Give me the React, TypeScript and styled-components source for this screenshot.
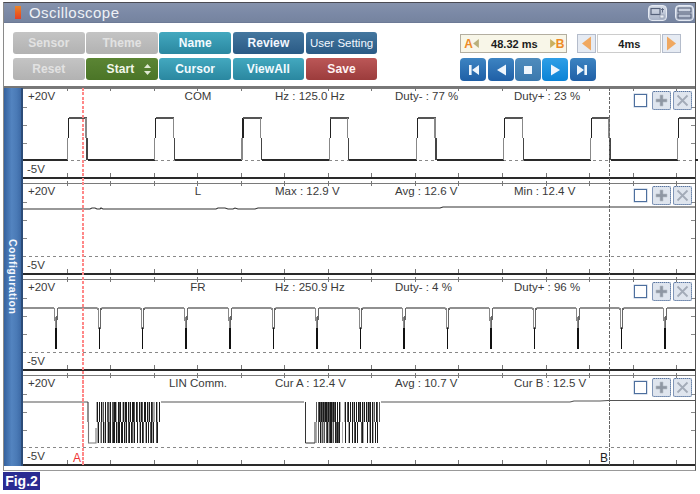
import React from "react";
import styled, { createGlobalStyle } from "styled-components";

const Global = createGlobalStyle`
  html, body { margin: 0; padding: 0; background: #fff; }
  body { font-family: "Liberation Sans", Arial, sans-serif; }
`;

const Page = styled.div`
  width: 700px;
  height: 494px;
  overflow: hidden;
  padding: 2px 0 0 3px;
  box-sizing: border-box;
`;
const Window = styled.div`
  width: 693px;
  border-top: 1px solid #4a4a52;
  border-right: 1px solid #555;
  border-left: 1px solid #8a8a8a;
  border-bottom: 1px solid #999;
  box-sizing: border-box;
  height: 469px;
  background: #fff;
`;
const TitleBar = styled.div`
  height: 19px;
  display: flex;
  align-items: center;
  padding: 0 1px 0 11px;
  background: linear-gradient(#8592ac, #7a88a5 60%, #76849f);
  border-bottom: 1px solid #6d7a96;
`;
const TitleMark = styled.div`
  width: 6px;
  height: 13px;
  background: linear-gradient(#e8852a, #ea5a1e 60%, #e0402a);
  margin-right: 8px;
`;
const Title = styled.div`
  color: #eef1f6;
  font-size: 15px;
  letter-spacing: 0.45px;
  flex: 1;
`;
const HeadButton = styled.div`
  width: 19px;
  height: 16px;
  margin-left: 8px;
  border-radius: 4px;
  border: 1px solid #e4e9f2;
  box-sizing: border-box;
  background: linear-gradient(#d6dce8, #aab4c8);
  display: flex;
  align-items: center;
  justify-content: center;
`;
const Toolbar = styled.div`
  height: 65px;
  display: flex;
  align-items: flex-start;
  padding: 9px 0 0 9px;
  box-sizing: border-box;
  border-bottom: 2px solid #777;
`;
const ButtonGrid = styled.div`
  display: grid;
  grid-template-columns: repeat(5, 71.6px);
  grid-auto-rows: 22px;
  column-gap: 1.6px;
  row-gap: 4px;
`;
const tones = {
  gray: ["#c4c4c4", "#b2b2b2", "#e2e2e2"],
  teal: ["#43a8bf", "#2a87a0", "#f2fbff"],
  navy: ["#44779f", "#2a5a85", "#f2f7ff"],
  green: ["#5b8534", "#4b7527", "#f2f7ea"],
  red: ["#bb5757", "#9c3c3c", "#fff2f2"],
} as const;
type Tone = keyof typeof tones;
const ActionButton = styled.div<{ $tone: Tone; $narrow?: boolean }>`
  border-radius: 3px;
  display: flex;
  align-items: center;
  justify-content: center;
  font-size: ${(p) => (p.$narrow ? "11.5px" : "12px")};
  font-weight: ${(p) => (p.$narrow ? 400 : 700)};
  letter-spacing: ${(p) => (p.$narrow ? "0" : "0.1px")};
  color: ${(p) => tones[p.$tone][2]};
  background: linear-gradient(${(p) => tones[p.$tone][0]}, ${(p) => tones[p.$tone][1]});
  position: relative;
`;
const Spin = styled.span`
  font-size: 9px;
  margin-left: 10px;
  line-height: 8px;
  display: inline-flex;
  flex-direction: column;
  align-items: center;
  font-weight: 400;
`;
const SpinGlyph = styled.svg`
  display: block;
`;
const StartLabel = styled.span`
  margin-left: 14px;
`;
const Controls = styled.div`
  display: flex;
  flex-direction: column;
  margin-left: 83px;
  padding-top: 2px;
  gap: 5px;
`;
const ControlRow = styled.div`
  display: flex;
  align-items: center;
`;
const CursorBox = styled.div`
  width: 107px;
  height: 19px;
  box-sizing: border-box;
  border: 1px solid #b3aea0;
  background: #f8f6e8;
  display: flex;
  align-items: center;
  padding: 0 2px 0 3px;
`;
const CursorLetter = styled.span`
  color: #ee8a26;
  font-size: 12px;
  font-weight: 700;
`;
const CursorValue = styled.span`
  flex: 1;
  text-align: center;
  font-size: 11px;
  font-weight: 700;
  color: #1c1c1c;
`;
const StepButton = styled.div`
  width: 19px;
  height: 19px;
  box-sizing: border-box;
  border: 1px solid #b4bccb;
  background: #e6ebf3;
  display: flex;
  align-items: center;
  justify-content: center;
`;
const StepValue = styled.div`
  width: 64px;
  height: 19px;
  box-sizing: border-box;
  margin: 0 1px;
  border: 1px solid #ccc;
  background: #fff;
  display: flex;
  align-items: center;
  justify-content: center;
  font-size: 11px;
  font-weight: 700;
  color: #1c1c1c;
`;
const Stepper = styled.div`
  display: flex;
  margin-left: 10px;
`;
const Transport = styled.div`
  display: flex;
  gap: 1.3px;
`;
const TransportButton = styled.div<{ $kind?: "stop" | "play" }>`
  width: 26px;
  height: 23px;
  border-radius: 4px;
  display: flex;
  align-items: center;
  justify-content: center;
  background: ${(p) =>
    p.$kind === "stop"
      ? "linear-gradient(#4f8cbd, #3a78ad)"
      : p.$kind === "play"
      ? "linear-gradient(#2f9fe6, #0b83d6)"
      : "linear-gradient(#3d84c2, #1f5fa6)"};
`;
const Body = styled.div`
  display: flex;
  height: 378px;
`;
const Sidebar = styled.div`
  width: 17px;
  border-right: 2px solid #2c4c78;
  background: linear-gradient(90deg, #35629f, #5384c0 45%, #4a7ab6 75%, #3d6aa6);
  display: flex;
  align-items: center;
  justify-content: center;
  color: #f4f8ff;
  font-size: 10.5px;
  font-weight: 700;
  letter-spacing: 0.5px;
  writing-mode: vertical-rl;
`;
const Charts = styled.div`
  flex: 1;
  position: relative;
  display: flex;
  flex-direction: column;
  gap: 4px;
`;
const Panel = styled.div<{ $h: number }>`
  position: relative;
  height: ${(p) => p.$h}px;
  box-sizing: border-box;
  border-top: 1px solid #7a7a7a;
  border-bottom: 2px solid #2a2a2a;
  &:last-of-type { border-bottom-color: #444; }
`;
const Plot = styled.svg`
  position: absolute;
  left: 0;
  top: -1px;
  overflow: visible;
  display: block;
`;
const Readouts = styled.div`
  position: relative;
  display: grid;
  grid-template-columns: 120px 127px 120px 119px auto;
  padding: 0 0 0 5px;
  font-size: 11.5px;
  color: #3a3a3a;
  line-height: 14px;
`;
const NameCell = styled.div`
  text-align: center;
  padding-right: 27px;
`;
const BottomLabel = styled.div`
  position: absolute;
  left: 4px;
  bottom: 1px;
  font-size: 11.5px;
  color: #3a3a3a;
  line-height: 14px;
`;
const PanelTools = styled.div`
  position: absolute;
  right: 3px;
  top: 2px;
  display: flex;
  align-items: center;
`;
const Check = styled.div`
  width: 13px;
  height: 13px;
  box-sizing: border-box;
  border: 1px solid #4d6f9e;
  background: #fff;
  margin-right: 3px;
  box-shadow: 0 0 0 0.5px #b8c6da;
`;
const ToolButton = styled.div`
  width: 19.5px;
  height: 19px;
  margin-left: 1.5px;
  box-sizing: border-box;
  border: 1px solid #a8b8cf;
  border-radius: 2px;
  outline: 1px dotted #5a75a0;
  outline-offset: -1px;
  background: #dfe5ee;
  display: flex;
  align-items: center;
  justify-content: center;
`;
const CursorLine = styled.div<{ $x: number; $color: string; $w: number }>`
  position: absolute;
  left: ${(p) => p.$x}px;
  top: 0;
  bottom: 0;
  width: ${(p) => p.$w}px;
  background: repeating-linear-gradient(${(p) => p.$color} 0 3px, transparent 3px 4.5px);
  pointer-events: none;
`;
const CursorTag = styled.div<{ $x: number; $color: string }>`
  position: absolute;
  left: ${(p) => p.$x}px;
  bottom: 1px;
  font-size: 12px;
  line-height: 13px;
  color: ${(p) => p.$color};
`;
const FigTag = styled.div`
  width: 37px;
  height: 18px;
  margin-top: 1px;
  background: #2b2c92;
  color: #fff;
  font-size: 14px;
  font-weight: 700;
  display: flex;
  align-items: center;
  justify-content: center;
`;

const W = 672;
const X0 = 23;

function Frame({ dash, h }: { dash: number; h: number }) {
  const xs: number[] = [];
  for (let x = 67; x < 695; x += 43.55) xs.push(x);
  return (
    <g shapeRendering="crispEdges">
      {xs.map((x) => (
        <g key={x} stroke="#777" strokeWidth="1">
          <line x1={x} x2={x} y1={-2} y2={3} />
          <line x1={x} x2={x} y1={h - 6} y2={h - 2} />
        </g>
      ))}
      {[19, 37, 55].map((y) => (
        <g key={y} stroke="#888" strokeWidth="1">
          <line x1={X0} x2={27} y1={y} y2={y} />
          <line x1={691} x2={695} y1={y} y2={y} />
        </g>
      ))}
      <line x1={X0} x2={695} y1={dash} y2={dash} stroke="#888" strokeWidth="1" strokeDasharray="3 3" />
    </g>
  );
}

function ComWave() {
  const rises = [67.5, 154.7, 242, 329.2, 416.5, 503.7, 590.5, 677.5];
  const high = 30;
  const low = 72;
  return (
    <g fill="none" strokeWidth="1.1" shapeRendering="crispEdges">
      {[X0, ...rises.map((r) => r + 20)].map((s, i) => (
        <line key={s} x1={s} x2={rises[i] ?? 695} y1={low} y2={low} stroke="#2a2a2a" strokeWidth="1.4" />
      ))}
      {rises.map((r) => {
        const end = Math.min(r + 19.5, 695);
        return (
          <g key={r}>
            <line x1={r} x2={r} y1={low} y2={50} stroke="#888" />
            <line x1={r + 1} x2={r + 1} y1={50} y2={high} stroke="#222" />
            <line x1={r + 1} x2={end} y1={high} y2={high} stroke="#555" strokeWidth="1.6" />
            {r < 670 && <line x1={end - 1} x2={end - 1} y1={high} y2={50} stroke="#888" />}
            {r < 670 && <line x1={end} x2={end} y1={50} y2={low} stroke="#444" />}
          </g>
        );
      })}
    </g>
  );
}

function LineWave() {
  return (
    <path
      d="M23 26H90l2 -1H95l2 1H100l1 -1l2 1H216l2 -1H225l3 1H233l2 -1l3 1H250H255l3 -1H265H440l3 -1H450H695"
      fill="none"
      stroke="#333"
      strokeWidth="1.1"
    />
  );
}

function DipWave() {
  const dips = [56, 99.5, 142.5, 186, 230, 273.5, 317, 360.5, 404, 447.5, 491, 534.5, 578, 621.5, 665];
  return (
    <g fill="none" strokeWidth="1.2">
      <path d={dips.reduce((acc, x) => acc + `H${x - 2}M${x + 2} 29`, "M23 29") + "H695"} stroke="#222" />
      {dips.map((x) => (
        <g key={x} shapeRendering="crispEdges">
          <line x1={x - 1.5} x2={x - 0.5} y1={29} y2={50} stroke="#888" />
          <line x1={x + 1.5} x2={x + 0.5} y1={29} y2={50} stroke="#666" />
          <line x1={x} x2={x} y1={49} y2={70} stroke="#111" strokeWidth="1.4" />
        </g>
      ))}
    </g>
  );
}

const shade: Record<string, string> = { "#": "#1a1a1a", "+": "#555", ".": "#aaa" };
function Bars({ pattern, x0, y, h }: { pattern: string; x0: number; y: number; h: number }) {
  return (
    <g shapeRendering="crispEdges">
      {pattern.split("").map((c, i) =>
        shade[c] ? <rect key={i} x={x0 + i} y={y} width={1} height={h} fill={shade[c]} /> : null,
      )}
    </g>
  );
}

const burstA = {
  top: ".# # #.+ # ++.# ++##. #+# .#.## #.# ##+ #+ #.#+ ## #.# #+.. #. #",
  bot: " .# .+ #.# .#+# +## #.## ## #.# +# #+.#  # .# #+ .# # +#.#  +# ",
};
const burstB = {
  top: "+ +#+#+#+##+#+##+#+# # #.   .# +# # #.# # #+# #.# #.#+# #.+ #+ +",
  bot: ". + #.+.+ +#.+##.+ #+#+#  .  #  .#  # +# #   +#.   # .# #. # #  ",
};

function LinWave() {
  const hi = 27;
  const lo = 68;
  const mid = 47;
  return (
    <g fill="none">
      <path d={`M23 ${hi}H88`} stroke="#555" strokeWidth="1.1" />
      <path d={`M88 ${hi}V${mid}`} stroke="#333" strokeWidth="1.1" />
      <path d={`M88.5 ${mid}V${lo}H96V${mid + 6}`} stroke="#777" strokeWidth="1.1" />
      <Bars pattern={burstA.top} x0={96} y={hi} h={mid - hi} />
      <Bars pattern={burstA.bot} x0={96} y={mid} h={lo - mid} />
      <path d={`M161 ${hi}H304`} stroke="#555" strokeWidth="1.1" />
      <path d={`M305.5 ${hi}V${lo}H315V${mid}`} stroke="#333" strokeWidth="1" />
      <Bars pattern={burstB.top} x0={316} y={hi} h={mid - hi} />
      <Bars pattern={burstB.bot} x0={316} y={mid} h={lo - mid} />
      <path d={`M381 ${hi}H570l4 -1H600l8 -0.5H695`} stroke="#555" strokeWidth="1.1" />
    </g>
  );
}

function PlusIcon() {
  return (
    <svg width="15" height="15" viewBox="0 0 15 15">
      <path d="M6 2h3v4h4v3H9v4H6V9H2V6h4z" fill="#8f97a3" stroke="#b6bcc6" strokeWidth="0.6" />
    </svg>
  );
}
function CrossIcon() {
  return (
    <svg width="15" height="15" viewBox="0 0 15 15">
      <path d="M2.5 2.5l10 10M12.5 2.5l-10 10" stroke="#a3abb8" strokeWidth="1.8" />
    </svg>
  );
}

type Row = {
  h: number;
  name: string;
  a: string;
  b: string;
  c: string;
  dash: number;
  wave: React.ReactNode;
};
const rows: Row[] = [
  { h: 91, name: "COM", a: "Hz : 125.0 Hz", b: "Duty- : 77 %", c: "Duty+ : 23 %", dash: 72, wave: <ComWave /> },
  { h: 92, name: "L", a: "Max : 12.9 V", b: "Avg : 12.6 V", c: "Min : 12.4 V", dash: 73, wave: <LineWave /> },
  { h: 92, name: "FR", a: "Hz : 250.9 Hz", b: "Duty- : 4 %", c: "Duty+ : 96 %", dash: 73, wave: <DipWave /> },
  { h: 91, name: "LIN Comm.", a: "Cur A : 12.4 V", b: "Avg : 10.7 V", c: "Cur B : 12.5 V", dash: 72, wave: <LinWave /> },
];

function Tri({ dir, color, w = 7, h = 11 }: { dir: "l" | "r"; color: string; w?: number; h?: number }) {
  return (
    <svg width={w} height={h} viewBox="0 0 7 11">
      <path d={dir === "l" ? "M7 0v11L0 5.5z" : "M0 0v11l7-5.5z"} fill={color} />
    </svg>
  );
}

function Glyph({ kind }: { kind: "first" | "prev" | "stop" | "play" | "last" }) {
  const d = {
    first: "M3 2h2.6v10H3zM6 7l7-5v10z",
    prev: "M3 7l9-5.5v11z",
    stop: "M3 3h8v8H3z",
    play: "M3 1.5l9 5.5-9 5.5z",
    last: "M1 2l7 5-7 5zM8.4 2H11v10H8.4z",
  }[kind];
  return (
    <svg width="14" height="14" viewBox="0 0 14 14">
      <path d={d} fill="#eef5fc" />
    </svg>
  );
}

export default function App() {
  return (
    <Page>
      <Global />
      <Window>
        <TitleBar>
          <TitleMark />
          <Title>Oscilloscope</Title>
          <HeadButton>
            <svg width="15" height="12" viewBox="0 0 15 12">
              <rect x="1" y="1.5" width="9" height="6" fill="none" stroke="#56617a" strokeWidth="1.2" />
              <rect x="10" y="8" width="4" height="3" fill="#e8ecf3" stroke="#8d97ab" strokeWidth="0.7" />
              <path d="M12.5 1.5v4M11 3l1.5-1.5L14 3" fill="none" stroke="#56617a" strokeWidth="0.9" />
            </svg>
          </HeadButton>
          <HeadButton>
            <svg width="15" height="12" viewBox="0 0 15 12">
              <rect x="1" y="1" width="13" height="4" fill="none" stroke="#56617a" strokeWidth="1.1" />
              <rect x="1" y="7" width="13" height="4" fill="none" stroke="#56617a" strokeWidth="1.1" />
            </svg>
          </HeadButton>
        </TitleBar>
        <Toolbar>
          <ButtonGrid>
            <ActionButton $tone="gray">Sensor</ActionButton>
            <ActionButton $tone="gray">Theme</ActionButton>
            <ActionButton $tone="teal">Name</ActionButton>
            <ActionButton $tone="navy">Review</ActionButton>
            <ActionButton $tone="navy" $narrow>User Setting</ActionButton>
            <ActionButton $tone="gray">Reset</ActionButton>
            <ActionButton $tone="green">
              <StartLabel>Start</StartLabel>
              <Spin>
                <SpinGlyph width="7" height="11" viewBox="0 0 7 11">
                  <path d="M3.5 0L7 4H0zM3.5 11L0 7h7z" fill="#dfe8d2" />
                </SpinGlyph>
              </Spin>
            </ActionButton>
            <ActionButton $tone="teal">Cursor</ActionButton>
            <ActionButton $tone="teal">ViewAll</ActionButton>
            <ActionButton $tone="red">Save</ActionButton>
          </ButtonGrid>
          <Controls>
            <ControlRow>
              <CursorBox>
                <CursorLetter>A</CursorLetter>
                <Tri dir="l" color="#b9b07c" w={6} h={9} />
                <CursorValue>48.32 ms</CursorValue>
                <Tri dir="r" color="#c9b060" w={6} h={9} />
                <CursorLetter>B</CursorLetter>
              </CursorBox>
              <Stepper>
                <StepButton>
                  <Tri dir="l" color="#f0a860" w={9} h={15} />
                </StepButton>
                <StepValue>4ms</StepValue>
                <StepButton>
                  <Tri dir="r" color="#f0a860" w={9} h={15} />
                </StepButton>
              </Stepper>
            </ControlRow>
            <Transport>
              <TransportButton><Glyph kind="first" /></TransportButton>
              <TransportButton><Glyph kind="prev" /></TransportButton>
              <TransportButton $kind="stop"><Glyph kind="stop" /></TransportButton>
              <TransportButton $kind="play"><Glyph kind="play" /></TransportButton>
              <TransportButton><Glyph kind="last" /></TransportButton>
            </Transport>
          </Controls>
        </Toolbar>
        <Body>
          <Sidebar>Configuration</Sidebar>
          <Charts>
            {rows.map((r) => (
              <Panel key={r.name} $h={r.h}>
                <Plot width={W} height={r.h} viewBox={`${X0} 0 ${W} ${r.h}`}>
                  <Frame dash={r.dash} h={r.h} />
                  {r.wave}
                </Plot>
                <Readouts>
                  <div>+20V</div>
                  <NameCell>{r.name}</NameCell>
                  <div>{r.a}</div>
                  <div>{r.b}</div>
                  <div>{r.c}</div>
                </Readouts>
                <BottomLabel>-5V</BottomLabel>
                <PanelTools>
                  <Check />
                  <ToolButton><PlusIcon /></ToolButton>
                  <ToolButton><CrossIcon /></ToolButton>
                </PanelTools>
              </Panel>
            ))}
            <CursorLine $x={58.5} $w={2} $color="#f88" />
            <CursorLine $x={585.5} $w={1.5} $color="#666" />
            <CursorTag $x={50} $color="#e33">A</CursorTag>
            <CursorTag $x={577} $color="#222">B</CursorTag>
          </Charts>
        </Body>
      </Window>
      <FigTag>Fig.2</FigTag>
    </Page>
  );
}
